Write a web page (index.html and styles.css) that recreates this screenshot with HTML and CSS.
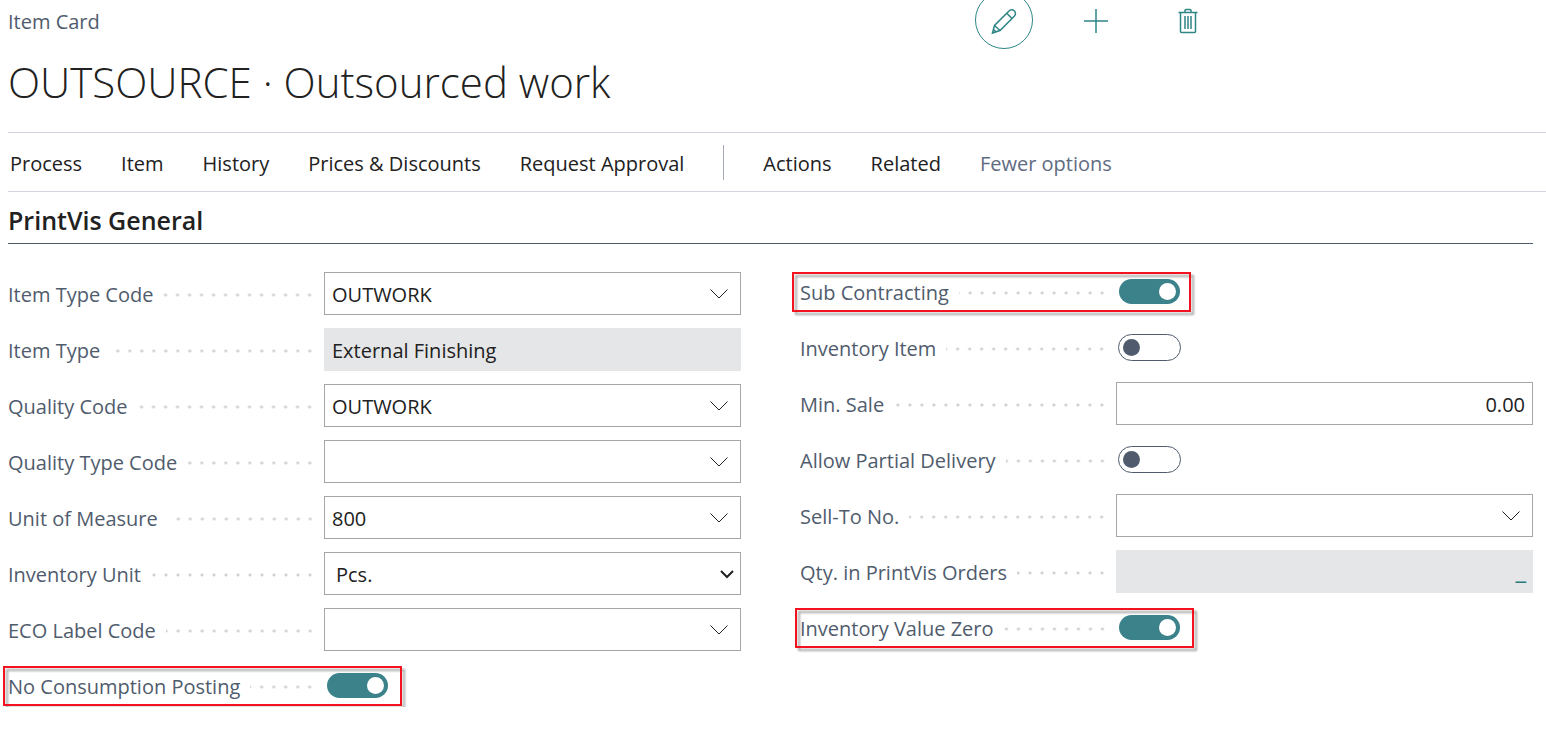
FILE: index.html
```
<!DOCTYPE html>
<html lang="en">
<head>
    <meta charset="UTF-8">
    <meta name="viewport" content="width=device-width, initial-scale=1.0">
    <title>Item Card</title>
    <link rel="stylesheet" href="styles.css">
</head>
<body>
    <header class="top">
        <p class="caption">Item Card</p>
        <div class="toolbar">
            <button class="tool circle" type="button" aria-label="Edit">
                <svg width="28" height="28" viewBox="0 0 28 28">
                    <path d="M2.500 26l2-7.500L19 4a3.400 3.400 0 0 1 5.500 5L10 23.500z M4.500 18.500l5.500 5 M17 6.500l5 5 M3.500 22.500l3 2.500"/>
                </svg>
            </button>
            <button class="tool" type="button" aria-label="New">
                <svg width="28" height="28" viewBox="0 0 28 28">
                    <path d="M14 2v24M2 14h24"/>
                </svg>
            </button>
            <button class="tool" type="button" aria-label="Delete">
                <svg width="28" height="28" viewBox="0 0 28 28">
                    <path d="M4.500 5.500h19M6.500 5.500v19a1 1 0 0 0 1 1h13a1 1 0 0 0 1-1v-19M11 5V3.500a1 1 0 0 1 1-1h4a1 1 0 0 1 1 1V5M11 9v13M14 9v13M17 9v13"/>
                </svg>
            </button>
        </div>
    </header>
    <h1>OUTSOURCE · Outsourced work</h1>

    <nav class="menu">
        <a href="#">Process</a>
        <a href="#">Item</a>
        <a href="#">History</a>
        <a href="#">Prices &amp; Discounts</a>
        <a href="#">Request Approval</a>
        <span class="divider"></span>
        <a href="#">Actions</a>
        <a href="#">Related</a>
        <a href="#" class="fewer">Fewer options</a>
    </nav>

    <main>
        <h2>PrintVis General</h2>
        <form class="columns">
            <div class="column first">
                <div class="field">
                    <label for="itemTypeCode">Item Type Code</label>
                    <span class="dots"></span>
                    <div class="control">
                        <input type="text" id="itemTypeCode" value="OUTWORK">
                        <button class="arrow" type="button" aria-label="Open list"><svg width="18" height="10" viewBox="0 0 18 10"><path d="M0.500 0.500l8.500 8.500l8.500-8.500"/></svg></button>
                    </div>
                </div>
                <div class="field">
                    <label for="itemType">Item Type</label>
                    <span class="dots"></span>
                    <div class="control readonly">
                        <input type="text" id="itemType" value="External Finishing" readonly>
                    </div>
                </div>
                <div class="field">
                    <label for="qualityCode">Quality Code</label>
                    <span class="dots"></span>
                    <div class="control">
                        <input type="text" id="qualityCode" value="OUTWORK">
                        <button class="arrow" type="button" aria-label="Open list"><svg width="18" height="10" viewBox="0 0 18 10"><path d="M0.500 0.500l8.500 8.500l8.500-8.500"/></svg></button>
                    </div>
                </div>
                <div class="field">
                    <label for="qualityType">Quality Type Code</label>
                    <span class="dots"></span>
                    <div class="control">
                        <input type="text" id="qualityType">
                        <button class="arrow" type="button" aria-label="Open list"><svg width="18" height="10" viewBox="0 0 18 10"><path d="M0.500 0.500l8.500 8.500l8.500-8.500"/></svg></button>
                    </div>
                </div>
                <div class="field">
                    <label for="unitMeasure">Unit of Measure</label>
                    <span class="dots"></span>
                    <div class="control">
                        <input type="text" id="unitMeasure" value="800">
                        <button class="arrow" type="button" aria-label="Open list"><svg width="18" height="10" viewBox="0 0 18 10"><path d="M0.500 0.500l8.500 8.500l8.500-8.500"/></svg></button>
                    </div>
                </div>
                <div class="field">
                    <label for="inventoryUnit">Inventory Unit</label>
                    <span class="dots"></span>
                    <div class="control">
                        <select id="inventoryUnit">
                            <option>Pcs.</option>
                        </select>
                        <svg class="select-arrow" width="14" height="9" viewBox="0 0 14 9"><path d="M1 1l6 6l6-6"/></svg>
                    </div>
                </div>
                <div class="field">
                    <label for="ecoLabel">ECO Label Code</label>
                    <span class="dots"></span>
                    <div class="control">
                        <input type="text" id="ecoLabel">
                        <button class="arrow" type="button" aria-label="Open list"><svg width="18" height="10" viewBox="0 0 18 10"><path d="M0.500 0.500l8.500 8.500l8.500-8.500"/></svg></button>
                    </div>
                </div>
                <div class="field">
                    <label for="noConsumption">No Consumption Posting</label>
                    <span class="dots"></span>
                    <div class="switch">
                        <input type="checkbox" id="noConsumption" checked>
                    </div>
                    <span class="mark mark-posting"></span>
                </div>
            </div>

            <div class="column">
                <div class="field">
                    <label for="subContracting">Sub Contracting</label>
                    <span class="dots"></span>
                    <div class="switch">
                        <input type="checkbox" id="subContracting" checked>
                    </div>
                    <span class="mark mark-sub"></span>
                </div>
                <div class="field">
                    <label for="inventoryItem">Inventory Item</label>
                    <span class="dots"></span>
                    <div class="switch">
                        <input type="checkbox" id="inventoryItem">
                    </div>
                </div>
                <div class="field">
                    <label for="minSale">Min. Sale</label>
                    <span class="dots"></span>
                    <div class="control">
                        <input type="text" class="number" id="minSale" value="0.00">
                    </div>
                </div>
                <div class="field">
                    <label for="partialDelivery">Allow Partial Delivery</label>
                    <span class="dots"></span>
                    <div class="switch">
                        <input type="checkbox" id="partialDelivery">
                    </div>
                </div>
                <div class="field">
                    <label for="sellTo">Sell-To No.</label>
                    <span class="dots"></span>
                    <div class="control">
                        <input type="text" id="sellTo">
                        <button class="arrow" type="button" aria-label="Open list"><svg width="18" height="10" viewBox="0 0 18 10"><path d="M0.500 0.500l8.500 8.500l8.500-8.500"/></svg></button>
                    </div>
                </div>
                <div class="field">
                    <span class="label" id="qtyLabel">Qty. in PrintVis Orders</span>
                    <span class="dots"></span>
                    <div class="control readonly quantity">
                        <a href="#" aria-labelledby="qtyLabel">_</a>
                    </div>
                </div>
                <div class="field">
                    <label for="valueZero">Inventory Value Zero</label>
                    <span class="dots"></span>
                    <div class="switch">
                        <input type="checkbox" id="valueZero" checked>
                    </div>
                    <span class="mark mark-zero"></span>
                </div>
            </div>
        </form>
    </main>
</body>
</html>
```
FILE: styles.css
```
* {
    margin: 0;
    padding: 0;
    box-sizing: border-box;
}
body {
    background-color: white;
    color: #212121;
    font-family: "Open Sans", "Noto Sans", sans-serif;
    font-size: 20px;
    line-height: 28px;
    padding-left: 8px;
}
a {
    color: inherit;
    text-decoration: none;
}
button {
    background: none;
    border: none;
    cursor: pointer;
}
svg {
    display: block;
    fill: none;
    stroke: #212121;
}

/* header */
.top {
    display: flex;
    justify-content: space-between;
    height: 49px;
    overflow: hidden;
}
.caption {
    color: #505c6d;
    padding-top: 8px;
}
.toolbar {
    display: flex;
    align-items: flex-end;
    gap: 34px;
    margin-right: 329px;
}
.tool {
    display: flex;
    flex: none;
    align-items: center;
    justify-content: center;
    width: 58px;
    height: 58px;
    padding-top: 2px;
}
.tool svg {
    stroke: #2f8486;
    stroke-width: 1.5;
}
.circle {
    border: 1px solid #2f8486;
    border-radius: 50%;
}
h1 {
    font-size: 42px;
    font-weight: 300;
    line-height: 64px;
    padding-top: 1px;
    padding-bottom: 18px;
}

/* menu */
.menu {
    display: flex;
    align-items: center;
    gap: 39px;
    height: 60px;
    padding-left: 2px;
    border-top: 1px solid #d2d3dc;
    border-bottom: 1px solid #d2d3dc;
    white-space: nowrap;
}
.menu a {
    padding-top: 4px;
}
.divider {
    width: 1px;
    height: 35px;
    background-color: #a5abb6;
}
.fewer {
    color: #616c82;
}

/* fields */
main {
    padding-right: 13px;
}
h2 {
    font-size: 25px;
    font-weight: 600;
    line-height: 36px;
    padding: 10px 0 5px;
    border-bottom: 1px solid #505c6d;
    margin-bottom: 26px;
}
.columns {
    display: grid;
    grid-template-columns: 1fr 1fr;
    gap: 59px;
}
.column {
    display: flex;
    flex-direction: column;
    gap: 13px;
}
.first {
    padding-top: 2px;
}
.field {
    position: relative;
    display: grid;
    grid-template-columns: auto 1fr minmax(0, calc(100% - 316px));
    align-items: center;
    height: 43px;
}
label,
.label {
    color: #505c6d;
    padding-top: 2px;
    white-space: nowrap;
}
.dots {
    height: 4px;
    margin: 3px 8px 0 10px;
    background: radial-gradient(circle, #cfd1d7 1px, transparent 2px) right center / 12px 4px repeat-x;
}
.control {
    position: relative;
    display: flex;
    height: 43px;
    border: 1px solid #a6a6a6;
}
.control input,
.control select {
    flex: 1;
    min-width: 0;
    padding: 2px 7px 0;
    border: none;
    outline: none;
    background: none;
    color: #212121;
    font: inherit;
}
.control select {
    appearance: none;
    padding-left: 11px;
}
.control .number {
    text-align: right;
}
.readonly {
    background-color: #e5e6e8;
    border-color: #e5e6e8;
}
.arrow {
    display: flex;
    align-items: center;
    justify-content: center;
    width: 42px;
}
.select-arrow {
    position: absolute;
    right: 6px;
    top: 17px;
    stroke-width: 2;
    pointer-events: none;
}
.quantity {
    justify-content: flex-end;
    padding: 4px 6px 0;
}
.quantity a {
    color: #2a7a7d;
    font-size: 25px;
    font-weight: 600;
}
.switch {
    padding-left: 2px;
}
.switch input {
    appearance: none;
    display: block;
    width: 63px;
    height: 27px;
    padding: 4px;
    border: 1px solid #505c6d;
    border-radius: 14px;
    cursor: pointer;
}
.switch input::before {
    content: "";
    display: block;
    width: 17px;
    height: 17px;
    border-radius: 50%;
    background-color: #505c6d;
}
.switch input:checked {
    border-color: transparent;
    background-color: #3c828b;
    background-clip: padding-box;
}
.switch input:checked::before {
    margin-left: auto;
    background-color: white;
}

/* red frames around the fields to set */
.mark {
    position: absolute;
    top: 2px;
    width: 399px;
    height: 40px;
    border: 2px solid #f3131e;
    filter: drop-shadow(3px 3px 1px rgba(0, 0, 0, 0.35));
    pointer-events: none;
}
.mark-sub {
    left: -8px;
}
.mark-zero {
    left: -5px;
}
.mark-posting {
    left: -5px;
}
```
